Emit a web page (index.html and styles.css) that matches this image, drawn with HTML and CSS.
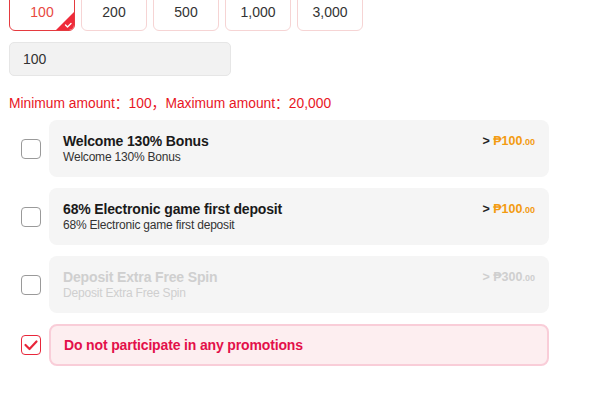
FILE: index.html
```html
<!DOCTYPE html>
<html>
<head>
<meta charset="utf-8">
<link rel="stylesheet" href="styles.css">
</head>
<body>
<div class="page">
  <div class="amounts">
    <div class="amt active">100
      <span class="corner"><svg width="18" height="18" viewBox="0 0 18 18"><path d="M18 0 L18 18 L0 18 Z" fill="#ef2b3a"/><path d="M9.5 13 L11.5 15 L15 11.5" fill="none" stroke="#fff" stroke-width="1.4" stroke-linecap="round" stroke-linejoin="round"/></svg></span>
    </div>
    <div class="amt">200</div>
    <div class="amt">500</div>
    <div class="amt">1,000</div>
    <div class="amt">3,000</div>
  </div>
  <div class="input">100</div>
  <div class="limit">Minimum amount：100，Maximum amount：20,000</div>
  <div class="list">
    <div class="row">
      <span class="cb"></span>
      <div class="card">
        <div class="text">
          <div class="title">Welcome 130% Bonus</div>
          <div class="sub">Welcome 130% Bonus</div>
        </div>
        <div class="price"><span class="gt">&gt;</span> <span class="val">₱100<small>.00</small></span></div>
      </div>
    </div>
    <div class="row">
      <span class="cb"></span>
      <div class="card">
        <div class="text">
          <div class="title">68% Electronic game first deposit</div>
          <div class="sub">68% Electronic game first deposit</div>
        </div>
        <div class="price"><span class="gt">&gt;</span> <span class="val">₱100<small>.00</small></span></div>
      </div>
    </div>
    <div class="row">
      <span class="cb"></span>
      <div class="card disabled">
        <div class="text">
          <div class="title">Deposit Extra Free Spin</div>
          <div class="sub">Deposit Extra Free Spin</div>
        </div>
        <div class="price"><span class="gt">&gt;</span> <span class="val">₱300<small>.00</small></span></div>
      </div>
    </div>
    <div class="row">
      <span class="cb checked"><svg width="20" height="20" viewBox="0 0 20 20"><path d="M4.5 10 L8.5 14 L15.5 6.5" fill="none" stroke="#e8263a" stroke-width="2.2" stroke-linecap="round" stroke-linejoin="round"/></svg></span>
      <div class="card none">
        <div class="title">Do not participate in any promotions</div>
      </div>
    </div>
  </div>
</div>
</body>
</html>
```
FILE: styles.css
```css
html, body { margin: 0; padding: 0; background: #fff; }
body { font-family: "Liberation Sans", Arial, "Noto Sans CJK SC", sans-serif; color: #333; }
.page { padding-left: 9px; }
.amounts { display: flex; gap: 6px; margin-top: -7px; }
.amt {
  position: relative;
  box-sizing: border-box;
  width: 66px; height: 38px;
  border: 1px solid #f6d4d4;
  border-radius: 6px;
  display: flex; align-items: center; justify-content: center;
  font-size: 14px; color: #333;
  overflow: hidden;
}
.amt.active { border-color: #e53a3f; color: #e8493f; }
.corner { position: absolute; right: 0; bottom: 0; width: 18px; height: 18px; line-height: 0; }
.input {
  box-sizing: border-box;
  margin-top: 11px;
  width: 222px; height: 34px;
  background: #f2f2f2;
  border: 1px solid #e6e6e6;
  border-radius: 5px;
  padding-left: 13px;
  display: flex; align-items: center;
  font-size: 14px; color: #333;
}
.limit { margin-top: 18px; font-size: 13.8px; line-height: 19px; color: #e8161f; }
.list { display: flex; flex-direction: column; gap: 11px; margin-top: 7px; }
.row { display: flex; align-items: center; }
.cb {
  box-sizing: border-box;
  width: 20px; height: 20px;
  margin-left: 12px; margin-right: 8px;
  border: 1px solid #9a9a9a;
  border-radius: 4px;
  background: #fff;
  line-height: 0;
  flex: none;
}
.cb.checked { border-color: #e8263a; }
.cb.checked svg { margin: -1px; }
.card {
  box-sizing: border-box;
  width: 500px; height: 57px;
  background: #f5f5f5;
  border-radius: 8px;
  padding: 13px 14px 0 14px;
  display: flex; justify-content: space-between;
}
.title { font-size: 14px; font-weight: bold; color: #1a1a1a; line-height: 17px; letter-spacing: -0.15px; }
.sub { font-size: 12px; color: #333; line-height: 15px; letter-spacing: -0.2px; }
.price { font-size: 12.5px; font-weight: bold; line-height: 16px; }
.gt { color: #222; }
.val { color: #f39b11; }
.val small { font-size: 9px; }
.card.disabled .title, .card.disabled .sub, .card.disabled .gt, .card.disabled .val { color: #cfcfcf; }
.card.none {
  height: 42px;
  padding: 0 13px;
  align-items: center;
  background: #fdeef0;
  border: 2px solid #f9cdd8;
}
.card.none .title { color: #e3104a; }
```
